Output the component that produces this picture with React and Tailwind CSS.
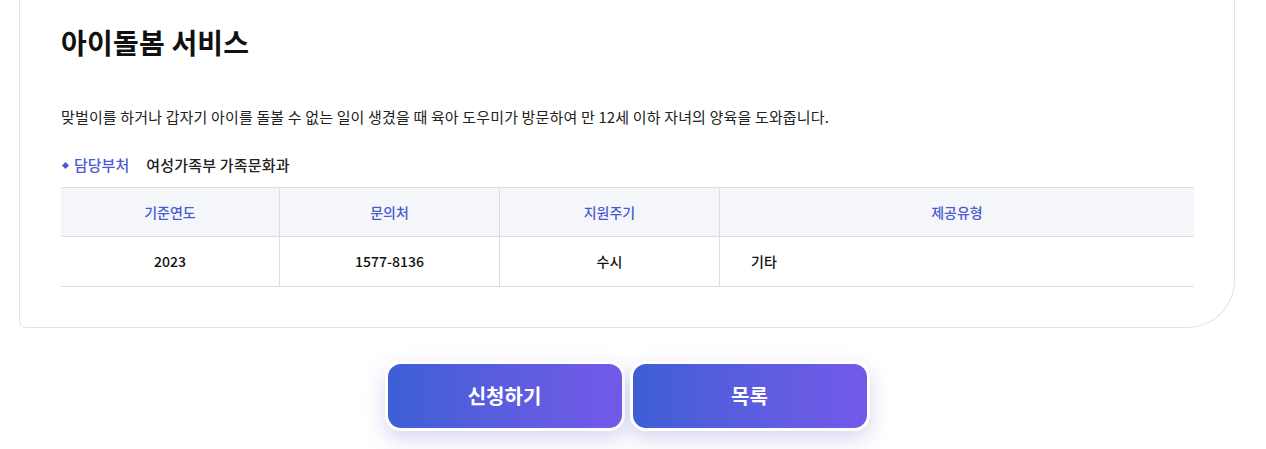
export default function App() {
  const font = { fontFamily: '"Noto Sans CJK KR", "Noto Sans", sans-serif' };
  return (
    <div className="w-[1266px] h-[449px] bg-white overflow-hidden" style={font}>
      <div className="pl-[19px] w-[1235px]">
        <div className="border-x border-b border-[#e2e2e2] rounded-bl-[7px] rounded-br-[48px] pl-[41px] pr-[40px] pt-[22px] pb-[40px]">
          <h1 className="text-[28px] leading-[40px] font-bold text-[#111] tracking-[0.2px]">아이돌봄 서비스</h1>
          <p className="mt-[44px] text-[15px] leading-[22px] text-[#222] tracking-[0.15px]">
            맞벌이를 하거나 갑자기 아이를 돌볼 수 없는 일이 생겼을 때 육아 도우미가 방문하여 만 12세 이하 자녀의 양육을 도와줍니다.
          </p>
          <div className="mt-[26px] flex items-center text-[15px] leading-[22px]">
            <span className="w-[5px] h-[5px] bg-[#4a5bd0] rotate-45 ml-[2px] mr-[6px]"></span>
            <span className="text-[#4a5bd0] font-medium">담당부처</span>
            <span className="ml-[17px] text-[#222] font-medium tracking-[0.2px]">여성가족부 가족문화과</span>
          </div>
          <div className="mt-[11px] border-t border-[#dcdee3]">
            <div className="grid grid-cols-[219px_220px_220px_1fr] bg-[#f5f6fa] border-b border-[#dcdee3] h-[49px] text-[14px] text-[#4a5bd0] font-medium">
              <div className="flex items-center justify-center border-r border-[#dcdee3]">기준연도</div>
              <div className="flex items-center justify-center border-r border-[#dcdee3]">문의처</div>
              <div className="flex items-center justify-center border-r border-[#dcdee3]">지원주기</div>
              <div className="flex items-center justify-center">제공유형</div>
            </div>
            <div className="grid grid-cols-[219px_220px_220px_1fr] border-b border-[#dcdee3] h-[50px] text-[14px] text-[#111] font-medium">
              <div className="flex items-center justify-center border-r border-[#dcdee3]">2023</div>
              <div className="flex items-center justify-center border-r border-[#dcdee3]">1577-8136</div>
              <div className="flex items-center justify-center border-r border-[#dcdee3]">수시</div>
              <div className="flex items-center pl-[31px]">기타</div>
            </div>
          </div>
        </div>
        <div className="mt-[33px] flex justify-center gap-[5px]">
          <button className="w-[240px] h-[70px] rounded-[16px] border-[3px] border-white bg-gradient-to-r from-[#3d5fd6] to-[#735ae9] text-white text-[20px] font-bold shadow-[0_8px_20px_rgba(90,90,200,0.25)]">신청하기</button>
          <button className="w-[240px] h-[70px] rounded-[16px] border-[3px] border-white bg-gradient-to-r from-[#3d5fd6] to-[#735ae9] text-white text-[20px] font-bold shadow-[0_8px_20px_rgba(90,90,200,0.25)]">목록</button>
        </div>
      </div>
    </div>
  );
}
